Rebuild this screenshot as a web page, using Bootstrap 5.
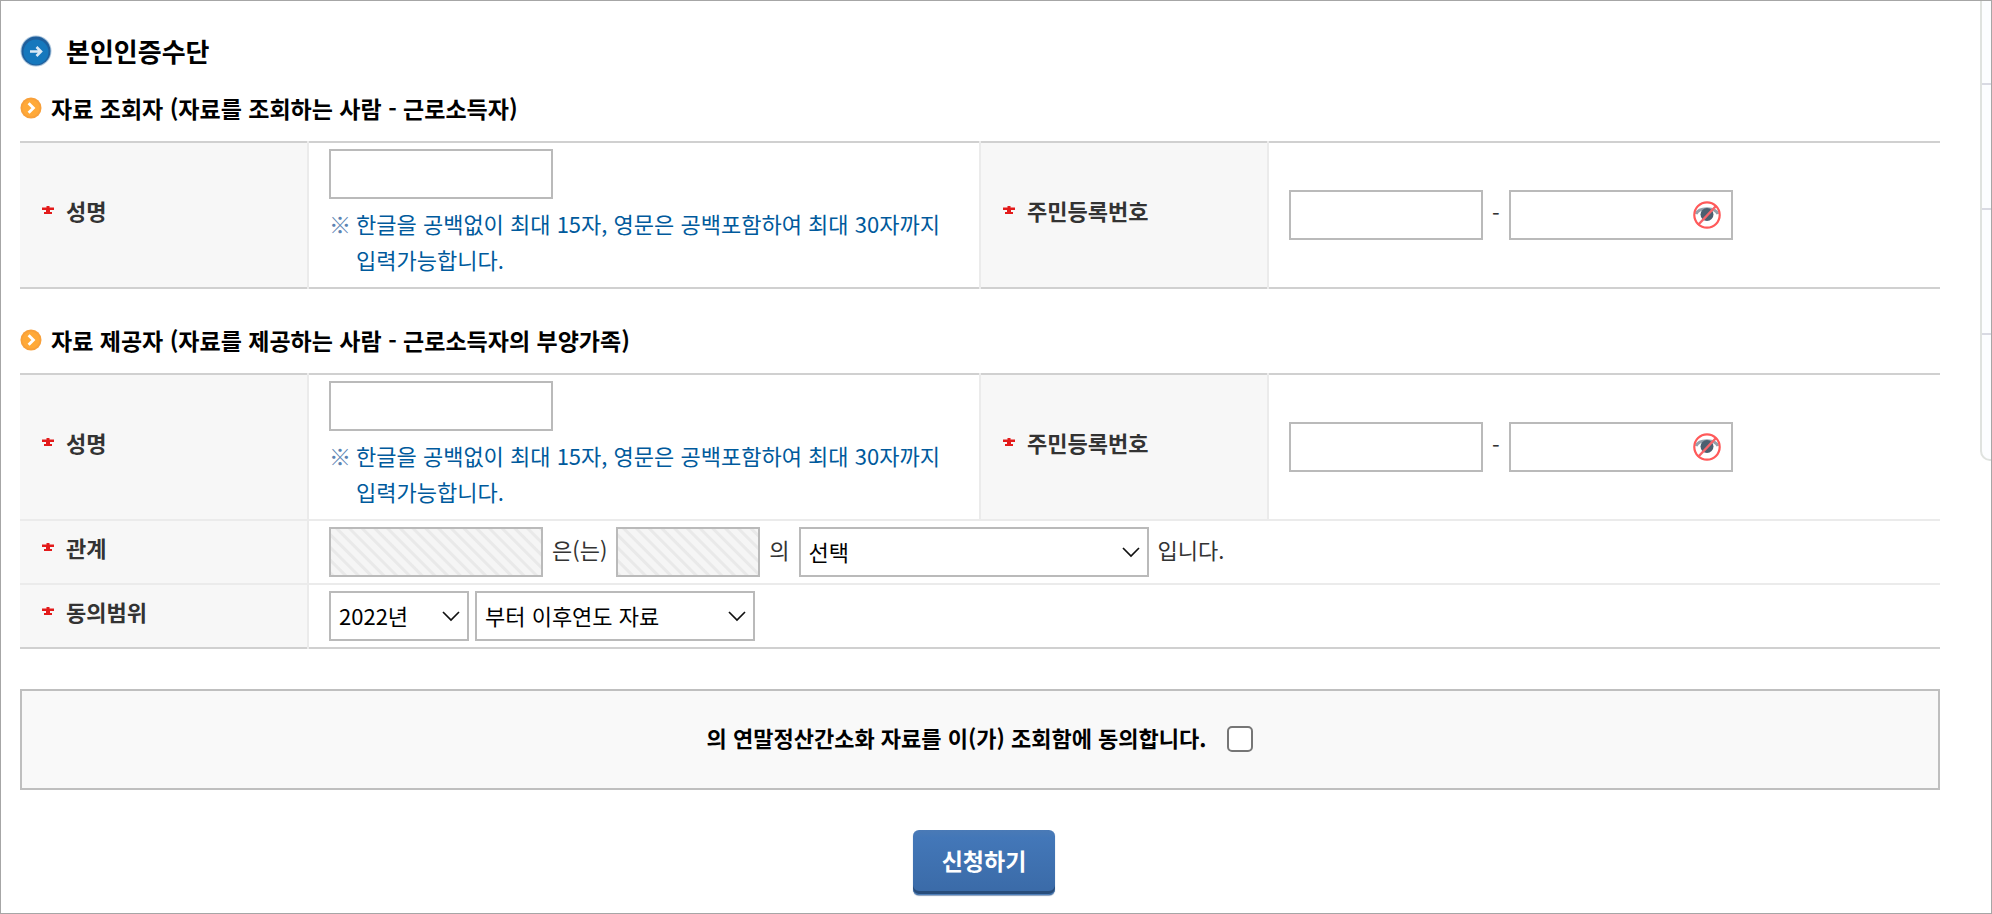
<!DOCTYPE html>
<html lang="ko">
<head>
<meta charset="utf-8">
<meta name="viewport" content="width=device-width, initial-scale=1">
<title>본인인증수단</title>
<link href="https://cdn.jsdelivr.net/npm/bootstrap@5.3.0/dist/css/bootstrap.min.css" rel="stylesheet">
<style>
  body { font-family: "Noto Sans CJK KR", "Noto Sans", sans-serif; font-size: 22px; line-height: 36px; color: #333; word-break: keep-all; }
  .page-frame { border: 1px solid #a6a6a6; min-height: 100vh; }
  .page-body { padding: 30px 40px 17px 19px; }
  .page-title { font-size: 26px; line-height: 40px; color: #000; gap: 14px; }
  .section-title { font-size: 23px; line-height: 34px; color: #000; gap: 9px; }
  .info-table { table-layout: fixed; border-top: 2px solid #d0d0d0; border-bottom: 2px solid #d0d0d0; color: #333; }
  .info-table > tbody > tr > * { padding: 6px 20px; border-width: 0; color: #333; }
  .info-table > tbody > tr + tr > * { border-top: 2px solid #ebebeb; }
  .info-table > tbody > tr > th { background: #f7f7f7; padding: 6px 20px 16px 22px; border-right: 2px solid #ebebeb; }
  .info-table > tbody > tr > td + th { border-left: 2px solid #ebebeb; }
  .col-label { width: 15%; }
  .col-name { width: 35%; }
  .required { gap: 12px; }
  .inline-fields { gap: 9px; }
  .inline-fields > span { padding-bottom: 6px; }
  .select-pair { gap: 6px; }
  .field { height: 50px; border: 2px solid #bababa; border-radius: 0; padding: 0 8px; font-size: 22px; color: #000; flex: none; }
  .field.form-select { padding: 0 44px 2px 8px; background-position: right 6px center; background-size: 20px 20px;
    background-image: url("data:image/svg+xml,%3csvg xmlns='http://www.w3.org/2000/svg' viewBox='0 0 20 20'%3e%3cpath fill='none' stroke='%23111' stroke-width='1.700' d='M2 6l8 8 8-8'/%3e%3c/svg%3e"); }
  .field:disabled { background: repeating-linear-gradient(45deg, #e9e9e9 0 2px, #f5f5f5 3px 8px, #e9e9e9 9px); opacity: 1; }
  .w-name { width: 224px; }
  .w-front { width: 194px; }
  .w-who { width: 214px; }
  .w-whom { width: 144px; }
  .w-relation { width: 350px; }
  .w-year { width: 140px; }
  .w-range { width: 280px; }
  .hint { color: #005a9c; padding: 6px 0 4px; gap: 5px; }
  .hint-mark { color: #5b83b3; }
  .eye-btn { right: 12px; }
  .section-viewer { margin-bottom: 34px; }
  .agree-box { border: 2px solid #bfbfbf; background: #f9f9f9; color: #000; padding: 28px 20px 29px; gap: 21px; }
  .agree-box .form-check-input { width: 26px; height: 26px; border: 2px solid #767676; border-radius: 5px; }
  .btn-apply { --bs-btn-color: #fff; --bs-btn-hover-color: #fff; --bs-btn-active-color: #fff; font-size: 23px; line-height: 36px; padding: 12px 29px 17px; border: 0; border-radius: 6px; background: linear-gradient(#4a7ab6, #4377b8 12%, #3a6aa7); box-shadow: inset 0 -1px 0 #4f7fb9, inset 0 -4px 0 #284d7b, 0 1px 1px #8a9fbc; }
  .side-menu { width: 11px; height: 460px; border: solid #dfe2df; border-width: 0 0 2px 2px; border-bottom-left-radius: 10px; background: #fcfdff; flex: none; }
  .side-cell { height: 125px; border-bottom: 2px solid #d9dae3; }
  .side-cell:first-child { height: 84px; }
</style>
</head>
<body>
<svg class="d-none" xmlns="http://www.w3.org/2000/svg">
  <symbol id="star" viewBox="0 0 12 8"><path fill="#e31b1b" d="M4.500 0h3v1.500H12v2.500H8v2h2v2H2V6h2V4H0V1.500h4.500z"/></symbol>
  <symbol id="chev" viewBox="0 0 23 23"><circle cx="11.500" cy="11.500" r="11" fill="#f8a03a"/><circle cx="11.500" cy="11.500" r="9" fill="#ffa938"/><path d="M9 6.500l5 5-5 5" fill="none" stroke="#fff" stroke-width="3"/></symbol>
  <symbol id="eyeoff" viewBox="0 0 28 28"><path d="M3 13c3-7 19-7 22 0" fill="none" stroke="#93a0ab" stroke-width="3"/><circle cx="14" cy="13.500" r="6.500" fill="#4c5f70"/><path d="M5 24L23 5" stroke="#f7646a" stroke-width="2.500"/><circle cx="14" cy="14" r="12.700" fill="none" stroke="#ff5a5a" stroke-width="2.200"/></symbol>
</svg>

<div class="page-frame d-flex align-items-start">
  <main class="page-body flex-grow-1">
    <h1 class="page-title d-flex align-items-center fw-bold mb-3">
      <svg width="32" height="32" viewBox="0 0 32 32" aria-hidden="true"><circle cx="16" cy="16" r="15.500" fill="#a9c4dc"/><circle cx="16" cy="16" r="14.500" fill="#1f5f9c"/><circle cx="16" cy="17" r="12.500" fill="#1678bd"/><path d="M10 16.500h10M16.500 12l4.500 4.500-4.500 4.500" fill="none" stroke="#dbe9f5" stroke-width="2.600"/></svg>
      <span>본인인증수단</span>
    </h1>

    <form>
      <section class="section-viewer">
        <h2 class="section-title d-flex align-items-center fw-bold mb-3 pt-1">
          <svg width="22" height="22" aria-hidden="true"><use href="#chev"/></svg>
          <span>자료 조회자 (자료를 조회하는 사람 - 근로소득자)</span>
        </h2>
        <table class="table info-table align-middle mb-0">
          <colgroup><col class="col-label"><col class="col-name"><col class="col-label"><col></colgroup>
          <tbody>
            <tr>
              <th scope="row"><label class="required d-flex align-items-center" for="viewerName"><svg width="12" height="8" aria-hidden="true"><use href="#star"/></svg>성명</label></th>
              <td>
                <input type="text" id="viewerName" class="form-control field w-name">
                <div class="hint d-flex"><span class="hint-mark">※</span><span>한글을 공백없이 최대 15자, 영문은 공백포함하여 최대 30자까지 입력가능합니다.</span></div>
              </td>
              <th scope="row"><label class="required d-flex align-items-center" for="viewerId"><svg width="12" height="8" aria-hidden="true"><use href="#star"/></svg>주민등록번호</label></th>
              <td>
                <div class="inline-fields d-flex align-items-center">
                  <input type="text" id="viewerId" class="form-control field w-front">
                  <span>-</span>
                  <div class="position-relative d-flex align-items-center">
                    <input type="password" class="form-control field w-name" aria-label="주민등록번호 뒷자리">
                    <button type="button" class="eye-btn btn p-0 border-0 d-flex position-absolute" aria-label="표시"><svg width="28" height="28"><use href="#eyeoff"/></svg></button>
                  </div>
                </div>
              </td>
            </tr>
          </tbody>
        </table>
      </section>

      <section class="mb-4 pb-3">
        <h2 class="section-title d-flex align-items-center fw-bold mb-3">
          <svg width="22" height="22" aria-hidden="true"><use href="#chev"/></svg>
          <span>자료 제공자 (자료를 제공하는 사람 - 근로소득자의 부양가족)</span>
        </h2>
        <table class="table info-table align-middle mb-0">
          <colgroup><col class="col-label"><col class="col-name"><col class="col-label"><col></colgroup>
          <tbody>
            <tr>
              <th scope="row"><label class="required d-flex align-items-center" for="giverName"><svg width="12" height="8" aria-hidden="true"><use href="#star"/></svg>성명</label></th>
              <td>
                <input type="text" id="giverName" class="form-control field w-name">
                <div class="hint d-flex"><span class="hint-mark">※</span><span>한글을 공백없이 최대 15자, 영문은 공백포함하여 최대 30자까지 입력가능합니다.</span></div>
              </td>
              <th scope="row"><label class="required d-flex align-items-center" for="giverId"><svg width="12" height="8" aria-hidden="true"><use href="#star"/></svg>주민등록번호</label></th>
              <td>
                <div class="inline-fields d-flex align-items-center">
                  <input type="text" id="giverId" class="form-control field w-front">
                  <span>-</span>
                  <div class="position-relative d-flex align-items-center">
                    <input type="password" class="form-control field w-name" aria-label="주민등록번호 뒷자리">
                    <button type="button" class="eye-btn btn p-0 border-0 d-flex position-absolute" aria-label="표시"><svg width="28" height="28"><use href="#eyeoff"/></svg></button>
                  </div>
                </div>
              </td>
            </tr>
            <tr>
              <th scope="row"><label class="required d-flex align-items-center" for="relation"><svg width="12" height="8" aria-hidden="true"><use href="#star"/></svg>관계</label></th>
              <td colspan="3">
                <div class="inline-fields d-flex align-items-center">
                  <input type="text" class="form-control field w-who" disabled aria-label="제공자">
                  <span>은(는)</span>
                  <input type="text" class="form-control field w-whom" disabled aria-label="조회자">
                  <span>의</span>
                  <select id="relation" class="form-select field w-relation"><option>선택</option></select>
                  <span>입니다.</span>
                </div>
              </td>
            </tr>
            <tr>
              <th scope="row"><label class="required d-flex align-items-center" for="year"><svg width="12" height="8" aria-hidden="true"><use href="#star"/></svg>동의범위</label></th>
              <td colspan="3">
                <div class="select-pair d-flex align-items-center">
                  <select id="year" class="form-select field w-year"><option>2022년</option></select>
                  <select class="form-select field w-range" aria-label="자료 범위"><option>부터 이후연도 자료</option></select>
                </div>
              </td>
            </tr>
          </tbody>
        </table>
      </section>

      <div class="agree-box d-flex align-items-center justify-content-center">
        <label class="fw-bold pb-1" for="agree">의 연말정산간소화 자료를 이(가) 조회함에 동의합니다.</label>
        <input type="checkbox" id="agree" class="form-check-input m-0">
      </div>

      <div class="text-center mt-4 pt-3 ps-2">
        <button type="button" class="btn btn-apply fw-bold">신청하기</button>
      </div>
    </form>
  </main>
  <aside class="side-menu" aria-hidden="true">
    <div class="side-cell"></div>
    <div class="side-cell"></div>
    <div class="side-cell"></div>
  </aside>
</div>
<script src="https://cdn.jsdelivr.net/npm/bootstrap@5.3.0/dist/js/bootstrap.bundle.min.js"></script>
</body>
</html>
